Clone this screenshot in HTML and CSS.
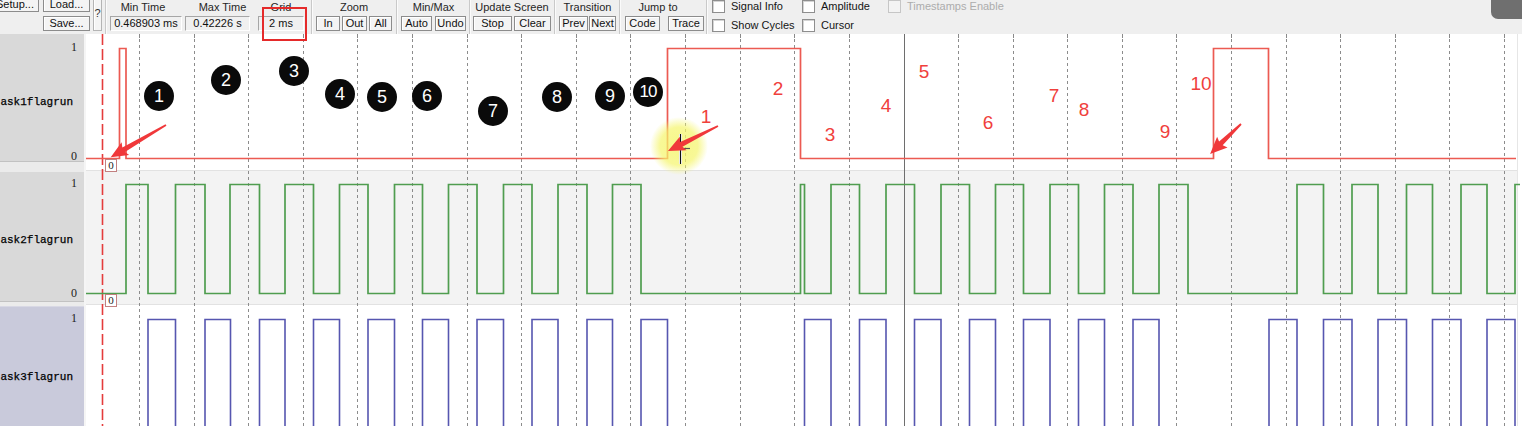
FILE: index.html
```html
<!DOCTYPE html>
<html>
<head>
<meta charset="utf-8">
<title>Logic Analyzer</title>
<link rel="stylesheet" href="styles.css">
</head>
<body>
<div class="toolbar">
  <div class="files">
    <div class="col">
      <div class="row"><span class="btn w-setup">Setup...</span><span class="btn w-load">Load...</span></div>
      <div class="row"><span class="spacer"></span><span class="btn w-load">Save...</span></div>
    </div>
    <span class="btn qm">?</span>
  </div>
  <div class="sep"></div>
  <div class="grp g-min"><div class="glabel lab-min">Min Time</div><div class="gctrl"><span class="val w-min">0.468903 ms</span></div></div>
  <div class="grp g-max"><div class="glabel lab-max">Max Time</div><div class="gctrl"><span class="val w-max">0.42226 s</span></div></div>
  <div class="grp g-grid"><div class="glabel">Grid</div><div class="gctrl"><span class="val w-grid">2 ms</span></div></div>
  <div class="sep s-wide"></div>
  <div class="grp g-zoom"><div class="glabel">Zoom</div><div class="gctrl gap2"><span class="btn w24">In</span><span class="btn w25">Out</span><span class="btn w23">All</span></div></div>
  <div class="sep s4"></div>
  <div class="grp g3"><div class="glabel">Min/Max</div><div class="gctrl gap3"><span class="btn w31">Auto</span><span class="btn w31">Undo</span></div></div>
  <div class="sep"></div>
  <div class="grp g2"><div class="glabel">Update Screen</div><div class="gctrl gap2"><span class="btn w39">Stop</span><span class="btn w37">Clear</span></div></div>
  <div class="sep"></div>
  <div class="grp g3"><div class="glabel">Transition</div><div class="gctrl gap1"><span class="btn w29">Prev</span><span class="btn w27">Next</span></div></div>
  <div class="sep"></div>
  <div class="grp g4"><div class="glabel lab-jump">Jump to</div><div class="gctrl gap8"><span class="btn w35">Code</span><span class="btn w36">Trace</span></div></div>
  <div class="sep s2"></div>
  <div class="checks">
    <div class="ckcol c1">
      <div class="ck"><span class="box"></span>Signal Info</div>
      <div class="ck"><span class="box"></span>Show Cycles</div>
    </div>
    <div class="ckcol c2">
      <div class="ck"><span class="box"></span>Amplitude</div>
      <div class="ck"><span class="box"></span>Cursor</div>
    </div>
    <div class="ckcol">
      <div class="ck off"><span class="box"></span>Timestamps Enable</div>
    </div>
  </div>
</div>

<div class="main">
  <div class="labels">
    <div class="lab lab1">
      <div class="v v1a">1</div>
      <div class="nm nm1"><span>task1flagrun</span></div>
      <div class="v v0a">0</div>
    </div>
    <div class="lab lab2">
      <div class="v v1b">1</div>
      <div class="nm nm2"><span>task2flagrun</span></div>
      <div class="v v0b">0</div>
    </div>
    <div class="lab lab3">
      <div class="v v1c">1</div>
      <div class="nm nm3"><span>task3flagrun</span></div>
    </div>
  </div>
  <div class="wave">
    <svg width="1436" height="392" viewBox="86 34 1436 392" xmlns="http://www.w3.org/2000/svg">
      <defs>
        <radialGradient id="glow">
          <stop offset="0" stop-color="#f5f56a" stop-opacity="0.8"/>
          <stop offset="0.65" stop-color="#f5f56a" stop-opacity="0.7"/>
          <stop offset="1" stop-color="#f5f56a" stop-opacity="0"/>
        </radialGradient>
      </defs>
      <rect x="86" y="34" width="1436" height="392" fill="#ffffff"/>
      <rect x="86" y="171" width="1431" height="133" fill="#f3f3f3"/>
      <path d="M86 170.5H1517M86 304.5H1517" stroke="#e2e2e2" stroke-width="1"/>
      <path d="M1517.5 34V426" stroke="#e6e6e6" stroke-width="1"/>
      <path d="M139.5 34V38M194.5 34V38M248.5 34V38M303.5 34V38M357.5 34V38M412.5 34V38M467.5 34V38M521.5 34V38M576.5 34V38M630.5 34V38M685.5 34V38M740.5 34V38M794.5 34V38M849.5 34V38M958.5 34V38M1013.5 34V38M1067.5 34V38M1122.5 34V38M1176.5 34V38M1231.5 34V38M1286.5 34V38M1340.5 34V38M1395.5 34V38M1449.5 34V38M1504.5 34V38" stroke="#8a8a8a" stroke-width="1"/>
      <path d="M139.5 39V426M194.5 39V426M248.5 39V426M303.5 39V426M357.5 39V426M412.5 39V426M467.5 39V426M521.5 39V426M576.5 39V426M630.5 39V426M685.5 39V426M740.5 39V426M794.5 39V426M849.5 39V426M958.5 39V426M1013.5 39V426M1067.5 39V426M1122.5 39V426M1176.5 39V426M1231.5 39V426M1286.5 39V426M1340.5 39V426M1395.5 39V426M1449.5 39V426M1504.5 39V426" stroke="#8c8c8c" stroke-width="1" stroke-dasharray="3 3"/>
      <path d="M904.5 34V426" stroke="#6e6e6e" stroke-width="1"/>
      <path d="M102.5 34V426" stroke="#e43c3c" stroke-width="1.6" stroke-dasharray="11 4"/>
      <path d="M86 158.5H119.5V48.5H126V158.5H667.5V48.5H800.5V158.5H1213.5V48.5H1268.5V158.5H1516" fill="none" stroke="#ec5a52" stroke-width="1.7"/>
      <path d="M86 293.5H126V184.5H148V293.5H175.5V184.5H205V293.5H230V184.5H259.5V293.5H285V184.5H313.5V293.5H339.5V184.5H368V293.5H394.5V184.5H422.5V293.5H448.5V184.5H477V293.5H503.5V184.5H532V293.5H558V184.5H587V293.5H612.5V184.5H641V293.5H800.5V184.5H804.5V293.5H831V184.5H859.5V293.5H886V184.5H914.5V293.5H941V184.5H969.5V293.5H995.5V184.5H1023.5V293.5H1050V184.5H1078.5V293.5H1104.5V184.5H1133V293.5H1159V184.5H1188V293.5H1297V184.5H1323.5V293.5H1352V184.5H1378V293.5H1406.5V184.5H1432.5V293.5H1461V184.5H1487V293.5H1515V184.5H1520" fill="none" stroke="#4f9d4f" stroke-width="1.7"/>
      <path d="M86 440H148V319.5H175.5V440H205V319.5H230.5V440H259.5V319.5H285V440H313.5V319.5H339.5V440H368V319.5H394.5V440H422.5V319.5H448.5V440H477V319.5H503.5V440H532V319.5H558V440H587V319.5H612.5V440H641V319.5H667.5V440H804.5V319.5H831V440H859.5V319.5H886V440H914.5V319.5H941V440H969.5V319.5H995.5V440H1023.5V319.5H1050V440H1078.5V319.5H1104.5V440H1133V319.5H1159V440H1269V319.5H1297V440H1323.5V319.5H1352V440H1378V319.5H1406.5V440H1432.5V319.5H1461V440H1487V319.5H1515V440" fill="none" stroke="#5656b0" stroke-width="1.6"/>
      <circle cx="679" cy="146" r="29" fill="url(#glow)"/>
      <path d="M680.5 134V164" stroke="#ffffff" stroke-width="3"/>
      <path d="M680.5 134V164" stroke="#111111" stroke-width="1.2"/>
      <path d="M683 148.5H690" stroke="#555555" stroke-width="1.2"/>
      <g fill="#f0383a">
        <polygon transform="translate(166 125) rotate(149.8)" points="0,-0.9 49,-2.6 47,-7.5 64,0 47,7.5 49,2.6 0,0.9"/>
        <polygon transform="translate(718 126) rotate(153.4)" points="0,-0.9 41,-2.6 39,-7.5 56,0 39,7.5 41,2.6 0,0.9"/>
        <polygon transform="translate(1241 124) rotate(135.9)" points="0,-0.9 28,-2.6 26,-7.5 43,0 26,7.5 28,2.6 0,0.9"/>
      </g>
    </svg>
  </div>
</div>

<span class="zero z1">0</span>
<span class="zero z2">0</span>
<div class="hl"></div>
<div class="corner"></div>

<span class="dot d1">1</span>
<span class="dot d2">2</span>
<span class="dot d3">3</span>
<span class="dot d4">4</span>
<span class="dot d5">5</span>
<span class="dot d6">6</span>
<span class="dot d7">7</span>
<span class="dot d8">8</span>
<span class="dot d9">9</span>
<span class="dot d10">10</span>

<span class="rn r1">1</span>
<span class="rn r2">2</span>
<span class="rn r3">3</span>
<span class="rn r4">4</span>
<span class="rn r5">5</span>
<span class="rn r6">6</span>
<span class="rn r7">7</span>
<span class="rn r8">8</span>
<span class="rn r9">9</span>
<span class="rn r10">10</span>
</body>
</html>
```

FILE: styles.css
```css
html, body {
  margin: 0;
  padding: 0;
}
body {
  position: relative;
  width: 1522px;
  height: 426px;
  overflow: hidden;
  background: #ffffff;
  font-family: "Liberation Sans", Arial, sans-serif;
  font-size: 11px;
  color: #151515;
}

/* ---------- toolbar ---------- */
.toolbar {
  display: flex;
  align-items: flex-start;
  height: 34px;
  background: #efefef;
}
.files {
  display: flex;
  gap: 3px;
  margin-left: -9px;
}
.files .col {
  display: flex;
  flex-direction: column;
  gap: 4px;
  margin-top: -3px;
}
.files .row {
  display: flex;
  gap: 4px;
}
.spacer { width: 48px; }
.btn {
  box-sizing: border-box;
  display: flex;
  align-items: center;
  justify-content: center;
  height: 15px;
  border: 1px solid #8c8c8c;
  background: #f4f4f4;
  box-shadow: inset 1px 1px #ffffff;
  line-height: 13px;
  white-space: nowrap;
  color: #111;
}
.w-setup { width: 48px; }
.w-load { width: 47px; }
.qm {
  width: 9px;
  height: 34px;
  margin-top: -3px;
  align-items: flex-start;
  padding-top: 9px;
  border-color: #b4b4b4;
  color: #333;
}
.sep {
  width: 1px;
  height: 34px;
  background: #c9c9c9;
  border-right: 1px solid #fbfbfb;
  margin-left: 3px;
}
.s-wide { margin-left: 7px; }
.s4 { margin-left: 4px; }
.s2 { margin-left: 2px; }

.grp {
  display: flex;
  flex-direction: column;
}
.glabel {
  height: 16px;
  line-height: 14px;
  text-align: center;
  white-space: nowrap;
  color: #262626;
}
.gctrl {
  display: flex;
  height: 15px;
}
.gap1 { gap: 1px; }
.gap2 { gap: 2px; }
.gap3 { gap: 3px; }
.gap8 { gap: 8px; }
.g-min { margin-left: 3px; }
.g-max { margin-left: 3px; }
.g-grid { margin-left: 8px; }
.g-zoom { margin-left: 3px; }
.g2 { margin-left: 2px; }
.g3 { margin-left: 3px; }
.g4 { margin-left: 4px; }
.lab-min { padding-right: 6px; }
.lab-max { padding-left: 10px; }
.lab-jump { padding-right: 13px; }

.val {
  box-sizing: border-box;
  height: 15px;
  border: 1px solid;
  border-color: #a6a6a6 #ffffff #ffffff #a6a6a6;
  background: #f0f0f0;
  line-height: 13px;
  text-align: center;
  white-space: nowrap;
  color: #111;
}
.w-min { width: 72px; }
.w-max { width: 65px; }
.w-grid { width: 46px; }
.w23 { width: 23px; }
.w24 { width: 24px; }
.w25 { width: 25px; }
.w27 { width: 27px; }
.w29 { width: 29px; }
.w31 { width: 31px; }
.w35 { width: 35px; }
.w36 { width: 36px; }
.w37 { width: 37px; }
.w39 { width: 39px; }

.checks {
  display: flex;
  margin-left: 4px;
}
.ckcol {
  display: flex;
  flex-direction: column;
  gap: 5px;
  margin-top: -1px;
}
.c1 { width: 90px; }
.c2 { width: 86px; }
.ck {
  display: flex;
  align-items: center;
  gap: 6px;
  height: 14px;
  white-space: nowrap;
  color: #151515;
}
.box {
  box-sizing: border-box;
  width: 13px;
  height: 13px;
  border: 1px solid #8e8e8e;
  background: #ffffff;
  box-shadow: inset 1px 1px #d4d4d4;
}
.ck.off { color: #acacac; }
.ck.off .box {
  border-color: #c6c6c6;
  background: #f3f3f3;
  box-shadow: none;
}

/* ---------- main area ---------- */
.main {
  display: flex;
  height: 392px;
}
.labels {
  width: 84px;
  border-right: 2px solid #f5f5f5;
  display: flex;
  flex-direction: column;
  background: #ebebeb;
}
.lab {
  display: flex;
  flex-direction: column;
  background: #d9d9d9;
  box-sizing: border-box;
  border-bottom: 1px solid #c2c2c2;
}
.lab1 { height: 128px; margin-bottom: 10px; }
.lab2 { height: 130px; margin-bottom: 4px; }
.lab3 { flex: 1; background: #c9cadb; border-bottom: none; border-top: 1px solid #d8d8e4; }
.v {
  font-family: "Liberation Serif", "DejaVu Serif", serif;
  font-size: 12px;
  text-align: right;
  padding-right: 7px;
  color: #222;
}
.v1a { height: 26px; line-height: 26px; }
.v0a { margin-top: auto; height: 10px; line-height: 10px; }
.v1b { height: 22px; line-height: 22px; }
.v0b { margin-top: auto; height: 15px; line-height: 15px; }
.v1c { height: 23px; line-height: 23px; }
.nm {
  display: flex;
  align-items: center;
  justify-content: flex-end;
  overflow: hidden;
  padding-right: 11px;
  font-family: "Liberation Mono", "DejaVu Sans Mono", monospace;
  font-size: 11px;
  white-space: nowrap;
  color: #000;
  -webkit-text-stroke: 0.25px #000;
}
.nm1 { height: 84px; }
.nm2 { height: 92px; }
.nm3 { height: 94px; }
.wave {
  flex: 1;
}
.wave svg { display: block; }

/* ---------- overlays ---------- */
.zero {
  position: absolute;
  box-sizing: border-box;
  width: 12px;
  height: 13px;
  border: 1px solid #c28080;
  background: #ffffff;
  font-family: "Liberation Serif", serif;
  font-size: 11px;
  line-height: 11px;
  text-align: center;
  color: #222;
}
.z1 { left: 105px; top: 159px; }
.z2 { left: 105px; top: 294px; }

.hl {
  position: absolute;
  left: 262px;
  top: 7px;
  width: 45px;
  height: 34px;
  box-sizing: border-box;
  border: 2px solid #e52a2a;
}
.corner {
  position: absolute;
  right: 0;
  top: 0;
  width: 31px;
  height: 19px;
  background: #6f6f6f;
  border-bottom-left-radius: 7px;
}

.dot {
  position: absolute;
  width: 30px;
  height: 30px;
  margin-left: -15px;
  margin-top: -15px;
  border-radius: 50%;
  background: #0a0a0a;
  color: #ffffff;
  font-family: "Liberation Sans", Arial, sans-serif;
  font-size: 18px;
  line-height: 30px;
  text-align: center;
}
.d10 { letter-spacing: -1px; font-size: 17px; }
.d1 { left: 159px; top: 96px; }
.d2 { left: 226px; top: 80px; }
.d3 { left: 294px; top: 71px; }
.d4 { left: 340px; top: 94px; }
.d5 { left: 382px; top: 97px; }
.d6 { left: 427px; top: 96px; }
.d7 { left: 493px; top: 111px; }
.d8 { left: 557px; top: 97px; }
.d9 { left: 610px; top: 96px; }
.d10 { left: 648px; top: 92px; }

.rn {
  position: absolute;
  transform: translate(-50%, -50%);
  color: #f0403c;
  font-family: "Liberation Sans", Arial, sans-serif;
  font-size: 19px;
  line-height: 20px;
}
.r1 { left: 706px; top: 117px; }
.r2 { left: 778px; top: 89px; }
.r3 { left: 830px; top: 135px; }
.r4 { left: 886px; top: 106px; }
.r5 { left: 924px; top: 72px; }
.r6 { left: 988px; top: 123px; }
.r7 { left: 1054px; top: 96px; }
.r8 { left: 1084px; top: 110px; }
.r9 { left: 1165px; top: 132px; }
.r10 { left: 1201px; top: 84px; }
```
